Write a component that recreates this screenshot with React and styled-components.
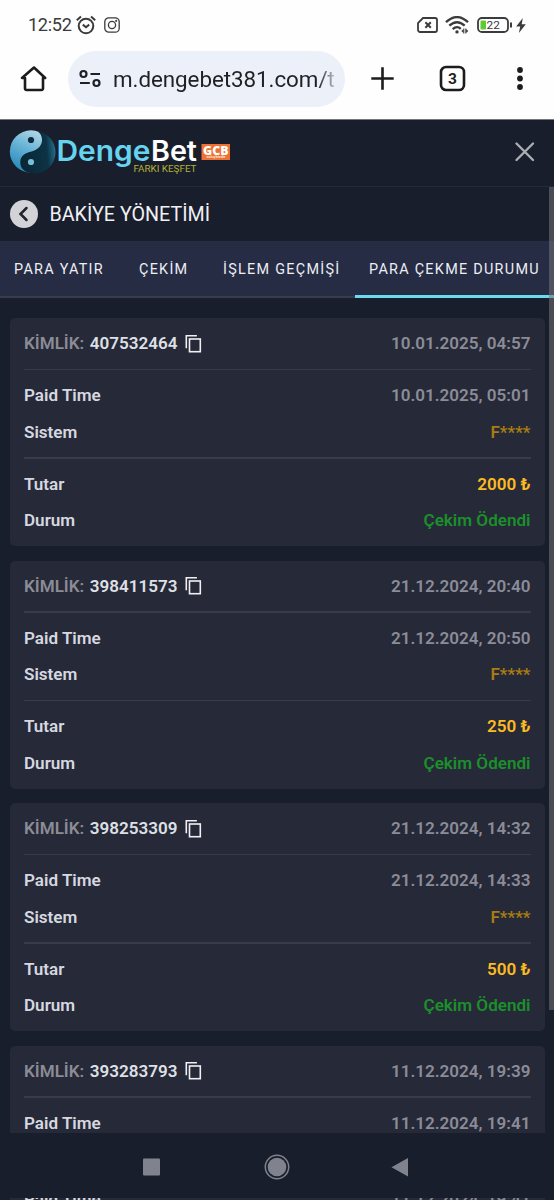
import React from "react";
import styled, { createGlobalStyle } from "styled-components";

const Global = createGlobalStyle`
  *, *::before, *::after { box-sizing: border-box; }
  html, body { margin: 0; background: #191e2c; }
  body { font-family: Roboto, "Liberation Sans", sans-serif; overflow: hidden; }
`;

const Phone = styled.div`
  width: 554px;
  height: 1200px;
  display: flex;
  flex-direction: column;
  overflow: hidden;
  background: #191e2c;
`;

const StatusBar = styled.div`
  height: 50px;
  flex: none;
  display: flex;
  align-items: center;
  background: #fefefe;
  color: #3b3b3b;
  padding: 0 28px 0 28px;
  svg { display: block; flex: none; }
`;

const Clock = styled.span`
  font-size: 18.2px;
  line-height: 20px;
  letter-spacing: -0.35px;
  width: 48px;
  white-space: nowrap;
`;

const StatusIcons = styled.div`
  display: flex;
  align-items: center;
  gap: ${(p) => p.$gap}px;
  margin-left: ${(p) => p.$push || "0"};
`;

const Toolbar = styled.div`
  height: 70px;
  flex: none;
  display: flex;
  align-items: flex-start;
  background: #fefefe;
  border-bottom: 1px solid #74777c;
  padding-left: 20px;
  svg { display: block; flex: none; }
`;

const ToolIcon = styled.div`
  width: ${(p) => p.$w}px;
  height: 56px;
  flex: none;
  display: flex;
  align-items: center;
  padding-left: ${(p) => p.$inset || 0}px;
`;

const AddressBar = styled.div`
  width: 277px;
  height: 56px;
  margin-top: 1px;
  flex: none;
  border-radius: 28px;
  background: #ecf0f9;
  display: flex;
  align-items: center;
  padding-left: 11px;
`;

const Address = styled.span`
  margin-left: 12px;
  width: 222px;
  overflow: hidden;
  white-space: nowrap;
  font-size: 22.4px;
  letter-spacing: -0.06px;
  line-height: 30px;
  color: #1f2125;
  mask-image: linear-gradient(90deg, #000 205px, transparent 226px);
`;

const Header = styled.header`
  height: 67px;
  flex: none;
  display: flex;
  justify-content: space-between;
  align-items: flex-start;
  padding: 9px 19px 0 9px;
  border-bottom: 1px solid #252838;
  svg { display: block; }
`;

const CloseButton = styled.button`
  border: 0;
  background: none;
  padding: 12px 0 0;
`;

const Scroller = styled.main`
  height: 946px;
  flex: none;
  overflow: hidden;
  display: grid;
  grid-template-columns: 554px;
  grid-template-rows: 946px;
`;

const Page = styled.div`
  grid-area: 1 / 1;
  overflow: hidden;
`;

const ScrollThumb = styled.div`
  grid-area: 1 / 1;
  justify-self: end;
  width: 5px;
  height: 823px;
  z-index: 1;
  background: rgba(115, 115, 120, 0.55);
`;

const TitleRow = styled.div`
  height: 54px;
  display: flex;
  align-items: center;
  gap: 11.5px;
  padding-left: 10px;
  svg { display: block; }
`;

const Title = styled.h1`
  margin: 0;
  padding-top: 1px;
  font-size: 19.7px;
  font-weight: 400;
  line-height: 28px;
  color: #f1f1f4;
`;

const Tabs = styled.nav`
  height: 57px;
  display: flex;
  background: #262c44;
  white-space: nowrap;
`;

const Tab = styled.a`
  width: ${(p) => p.$w}px;
  flex: none;
  padding-left: 14px;
  font-size: 14.4px;
  line-height: 58px;
  height: 57px;
  letter-spacing: 1.28px;
  color: #eceef4;
  border-bottom: ${(p) => (p.$active ? "3px solid #6dd9ee" : "2px solid #373c51")};
`;

const Cards = styled.div`
  display: flex;
  flex-direction: column;
  gap: 14.5px;
  padding: 20px 9px 0 9.5px;
`;

const Card = styled.article`
  height: 228px;
  flex: none;
  padding: 7px 14.5px;
  border-radius: 5px;
  background: #262937;
`;

const Row = styled.div`
  height: 36.5px;
  display: flex;
  align-items: center;
  justify-content: space-between;
  font-size: 17.07px;
  font-weight: 600;
  white-space: nowrap;
`;

const Divider = styled.hr`
  height: 1.5px;
  border: 0;
  margin: 7px 0 7px;
  background: #393b49;
`;

const Ident = styled.span`
  display: flex;
  align-items: center;
  color: #8b8c96;
  b { font-weight: 600; color: #dfe0e6; margin: 0 8px 0 5.5px; }
  svg { display: block; }
`;

const Label = styled.span`
  color: #d6d8e0;
`;

const tones = { muted: "#8b8c98", dim: "#a87d13", gold: "#fdbb22", green: "#1b8f2b" };

const Value = styled.span`
  color: ${(p) => tones[p.$tone]};
`;

const NavBar = styled.footer`
  height: 65px;
  flex: none;
  background: #191e2c;
  display: flex;
  justify-content: center;
  align-items: center;
  padding: 3px 2px 0 0;
  svg { display: block; }
`;

const Peek = styled.div`
  height: 2px;
  flex: none;
  overflow: hidden;
  margin: 0 9px 0 9.5px;
  padding: 0 14.5px;
  background: #262937;
`;

const PeekRow = styled(Row)`
  height: 20px;
  margin-top: -9px;
`;

const CopyIcon = () => (
  <svg width="18" height="19" viewBox="0 0 18 19" fill="none" stroke="#f0f0f4" strokeWidth="1.6">
    <path d="M1.3 14.300V1.8H11.900" />
    <rect x="4.500" y="5" width="10.8" height="12.7" />
  </svg>
);

const StatusLeft = () => (
  <StatusIcons $gap={8}>
    <svg width="20" height="20" viewBox="0 0 20 20" fill="none" stroke="#3b3b3b" strokeWidth="2">
      <circle cx="10" cy="11" r="7.3" />
      <path d="M.8 5.2 5 1.5M19.2 5.2 15 1.5M6.8 9.6l3.2 2.6 3.2-2.6" />
    </svg>
    <svg width="16" height="16" viewBox="0 0 16 16" fill="none" stroke="#3b3b3b" strokeWidth="1.3">
      <rect x=".8" y=".8" width="14.4" height="14.4" rx="4" />
      <circle cx="8" cy="8" r="3.6" />
      <circle cx="12.2" cy="3.9" r=".4" />
    </svg>
  </StatusIcons>
);

const Bolt = styled.svg`
  margin-left: -3px;
`;

const StatusRight = () => (
  <StatusIcons $gap={7.5} $push="auto">
    <svg width="21" height="16" viewBox="0 0 21 16" fill="none" stroke="#3b3b3b" strokeWidth="1.8">
      <path d="M6 1h12a2 2 0 0 1 2 2v10a2 2 0 0 1-2 2H3a2 2 0 0 1-2-2V6Z" />
      <path d="m8.4 5.2 5.400 5.6m0-5.6-5.400 5.6" strokeWidth="2" />
    </svg>
    <svg width="24" height="18" viewBox="0 0 24 18" fill="none" stroke="#3b3b3b" strokeWidth="2.3">
      <path d="M1 6.2Q12-4 23 6.2M4.3 9.7Q12 2.7 19.7 9.7M7.7 13.1Q12 9.3 15.8 12.8" />
      <circle cx="12" cy="15.9" r="1.7" fill="#3b3b3b" stroke="none" />
      <path d="M18.800 12.500v5M20.800 12.500v5" strokeWidth="1" />
      <path d="m18.500 13-2.200 2 2.200 2zm2.600 0 2.200 2-2.200 2z" fill="#3b3b3b" stroke="none" />
    </svg>
    <svg width="35" height="16" viewBox="0 0 35 16">
      <rect x="1" y="1" width="30" height="14" rx="4" fill="none" stroke="#3b3b3b" strokeWidth="1.8" />
      <rect x="3.500" y="3.600" width="5.500" height="8.800" rx="1" fill="#5dcb35" />
      <text x="9.600" y="12.200" fontSize="11.800" fill="#3b3b3b">22</text>
      <path d="M33 5.500h2v5h-2z" fill="#3b3b3b" />
    </svg>
    <Bolt width="10" height="15" viewBox="0 0 10 15">
      <path d="M6.800 0 .2 8.500h4L2.900 15 9.800 6.300H5.700Z" fill="#3b3b3b" />
    </Bolt>
  </StatusIcons>
);

const Logo = () => (
  <svg width="224" height="48" viewBox="0 0 224 48">
    <defs>
      <linearGradient id="light" x1="0.7" y1="0" x2="0.2" y2="1">
        <stop offset="0" stopColor="#b9d9e6" />
        <stop offset="0.45" stopColor="#68b4d6" />
        <stop offset="1" stopColor="#2186b8" />
      </linearGradient>
      <linearGradient id="dark" x1="0" y1="0.5" x2="1" y2="0.4">
        <stop offset="0" stopColor="#0a2635" />
        <stop offset="0.75" stopColor="#0c3345" />
        <stop offset="1" stopColor="#256f8b" />
      </linearGradient>
    </defs>
    <circle cx="22" cy="22.500" r="21.200" fill="url(#light)" />
    <path d="M28.500 2.300A21.200 21.200 0 1 1 19 43.500C13.500 41.500 10.800 37.500 11.300 32C12 26 17 24 22.500 22.500C29 20.700 33 16.500 33 11C33 7.500 31.500 4.500 28.500 2.300Z" fill="url(#dark)" />
    <circle cx="22" cy="11" r="3.100" fill="#0c2c3d" />
    <circle cx="22" cy="33" r="3.100" fill="#79bdd9" />
    <g fontFamily="Inter, sans-serif" fontWeight="600" fontSize="28">
      <text x="47.500" y="31.600" fill="#66d3ef" textLength="94" lengthAdjust="spacingAndGlyphs">Denge</text>
      <text x="142" y="31.600" fill="#fff" textLength="46" lengthAdjust="spacingAndGlyphs">Bet</text>
    </g>
    <text x="124.500" y="42.500" fontFamily="Roboto, sans-serif" fontSize="9.900" fill="#b5b035" textLength="63" lengthAdjust="spacing">FARKI KEŞFET</text>
    <rect x="192.500" y="15" width="28.500" height="16" fill="#ec7132" />
    <text x="194" y="25.500" fontFamily="Open Sans, sans-serif" fontWeight="800" fontSize="12.300" fill="#fff" textLength="25.500" lengthAdjust="spacingAndGlyphs">GCB</text>
    <text x="197.500" y="29.400" fontFamily="Roboto, sans-serif" fontWeight="700" fontSize="3.800" fill="#fde0cf" textLength="19" lengthAdjust="spacingAndGlyphs">satışbizde</text>
  </svg>
);

const records = [
  { id: "407532464", created: "10.01.2025, 04:57", paid: "10.01.2025, 05:01", amount: "2000 ₺" },
  { id: "398411573", created: "21.12.2024, 20:40", paid: "21.12.2024, 20:50", amount: "250 ₺" },
  { id: "398253309", created: "21.12.2024, 14:32", paid: "21.12.2024, 14:33", amount: "500 ₺" },
  { id: "393283793", created: "11.12.2024, 19:39", paid: "11.12.2024, 19:41" },
];

const Field = ({ label, tone, children }) => (
  <Row>
    <Label>{label}</Label>
    <Value $tone={tone}>{children}</Value>
  </Row>
);

const Withdrawal = ({ record }) => (
  <Card>
    <Row>
      <Ident>
        KİMLİK:<b>{record.id}</b>
        <CopyIcon />
      </Ident>
      <Value $tone="muted">{record.created}</Value>
    </Row>
    <Divider />
    <Field label="Paid Time" tone="muted">{record.paid}</Field>
    {record.amount && (
      <>
        <Field label="Sistem" tone="dim">F****</Field>
        <Divider />
        <Field label="Tutar" tone="gold">{record.amount}</Field>
        <Field label="Durum" tone="green">Çekim Ödendi</Field>
      </>
    )}
  </Card>
);

export default function App() {
  return (
    <Phone>
      <Global />
      <StatusBar>
        <Clock>12:52</Clock>
        <StatusLeft />
        <StatusRight />
      </StatusBar>
      <Toolbar>
        <ToolIcon $w={48}>
          <svg width="27" height="27" viewBox="0 0 27 27" fill="none" stroke="#1c1c1e" strokeWidth="2.600" strokeLinejoin="round">
            <path d="M5 13v10.500a1.500 1.500 0 0 0 1.500 1.500h15a1.500 1.500 0 0 0 1.500-1.500V13h2.200L14 2.500 2 13Z" />
          </svg>
        </ToolIcon>
        <AddressBar>
          <svg width="22" height="20" viewBox="0 0 22 20" fill="none" stroke="#1f2125" strokeWidth="2.200">
            <circle cx="4.500" cy="5" r="3" />
            <circle cx="17.500" cy="14" r="3" />
            <path d="M11.500 5H21M1 14h9.800" />
          </svg>
          <Address>m.dengebet381.com/t</Address>
        </AddressBar>
        <ToolIcon $w={94} $inset={26}>
          <svg width="23" height="24" viewBox="0 0 23 24" stroke="#1c1c1e" strokeWidth="2.600">
            <path d="M.3 12.500h22.400M11.500 1.300v22.400" />
          </svg>
        </ToolIcon>
        <ToolIcon $w={75}>
          <svg width="27" height="27" viewBox="0 0 27 27">
            <rect x="2" y="2" width="23" height="23" rx="5" fill="none" stroke="#1c1c1e" strokeWidth="2.600" />
            <text x="13.500" y="19" fontSize="15.500" fontWeight="700" textAnchor="middle" fill="#1c1c1e">3</text>
          </svg>
        </ToolIcon>
        <ToolIcon $w={12}>
          <svg width="12" height="24" viewBox="0 0 12 24" fill="#1c1c1e">
            <circle cx="6" cy="4" r="2.900" />
            <circle cx="6" cy="12.500" r="2.900" />
            <circle cx="6" cy="21" r="2.900" />
          </svg>
        </ToolIcon>
      </Toolbar>
      <Header>
        <Logo />
        <CloseButton aria-label="Close">
          <svg width="21" height="21" viewBox="0 0 21 21" stroke="#abadb5" strokeWidth="2.400" strokeLinecap="round">
            <path d="m2.500 2.500 16.500 16.500m0-16.500-16.500 16.500" />
          </svg>
        </CloseButton>
      </Header>
      <Scroller>
        <Page>
          <TitleRow>
            <svg width="28" height="28" viewBox="0 0 28 28">
              <circle cx="14" cy="14" r="14" fill="#d3d3d7" />
              <path d="m16.500 8-6 6 6 6" fill="none" stroke="#20222d" strokeWidth="2.500" strokeLinecap="round" />
            </svg>
            <Title>BAKİYE YÖNETİMİ</Title>
          </TitleRow>
          <Tabs>
            <Tab $w={125}>PARA YATIR</Tab>
            <Tab $w={84}>ÇEKİM</Tab>
            <Tab $w={146}>İŞLEM GEÇMİŞİ</Tab>
            <Tab $w={199} $active>PARA ÇEKME DURUMU</Tab>
          </Tabs>
          <Cards>
            {records.map((r) => (
              <Withdrawal key={r.id} record={r} />
            ))}
          </Cards>
        </Page>
        <ScrollThumb />
      </Scroller>
      <NavBar>
        <svg width="266" height="26" viewBox="0 0 266 26" fill="#80838d">
          <rect x="0" y="4.500" width="17" height="17" rx="1" />
          <circle cx="134" cy="13" r="9.300" />
          <circle cx="134" cy="13" r="11.700" fill="none" stroke="#80838d" strokeWidth="1.500" />
          <path d="M265 4v18.500l-16.500-9.300Z" />
        </svg>
      </NavBar>
      <Peek>
        <PeekRow>
          <Label>Paid Time</Label>
          <Value $tone="muted">11.12.2024, 19:41</Value>
        </PeekRow>
      </Peek>
    </Phone>
  );
}
